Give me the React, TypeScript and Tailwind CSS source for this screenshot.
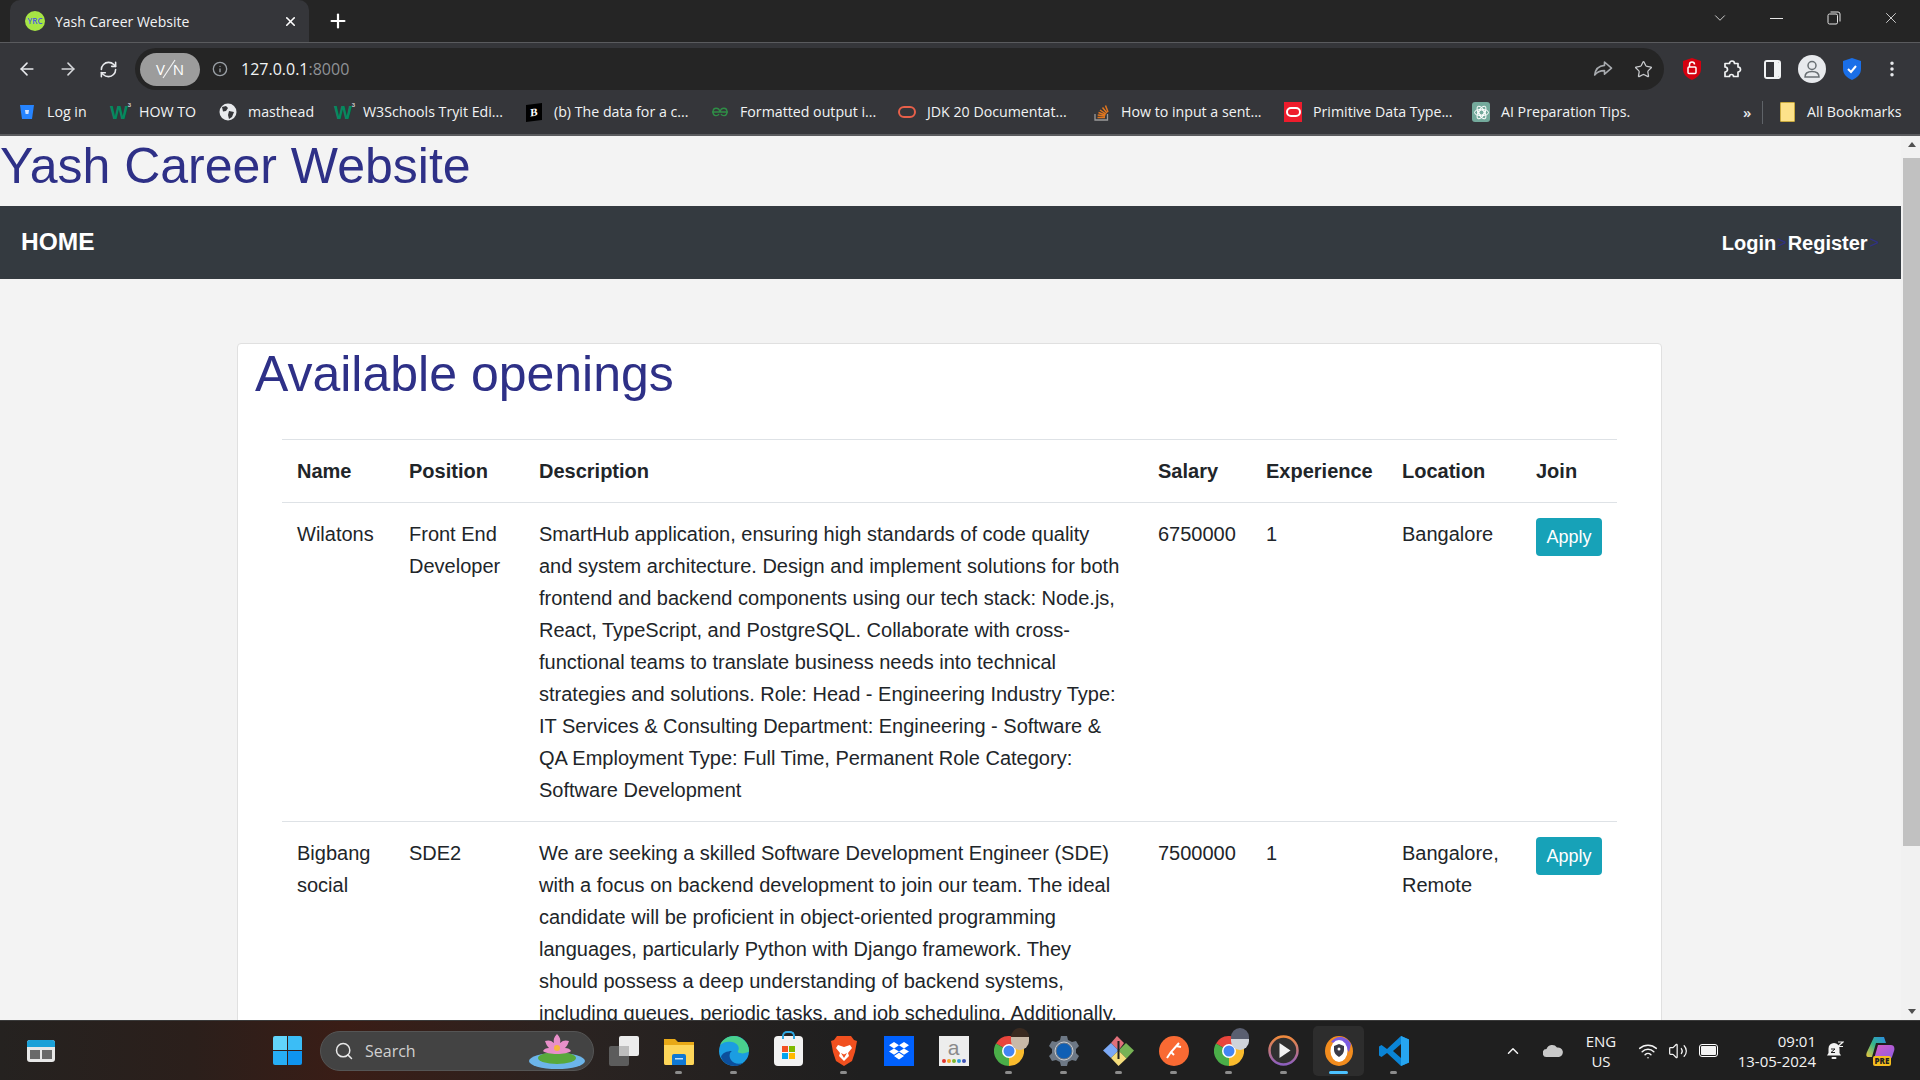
import {
  ArrowLeft,
  ArrowRight,
  ChevronDown,
  ChevronUp,
  Info,
  MoreVertical,
  Plus,
  RefreshCw,
  Search,
  Star,
  Volume2,
  Wifi,
  X,
} from "lucide-react"
import type { ReactNode } from "react"

const openings = [
  {
    name: "Wilatons",
    position: "Front End Developer",
    description:
      "SmartHub application, ensuring high standards of code quality and system architecture. Design and implement solutions for both frontend and backend components using our tech stack: Node.js, React, TypeScript, and PostgreSQL. Collaborate with cross-functional teams to translate business needs into technical strategies and solutions. Role: Head - Engineering Industry Type: IT Services & Consulting Department: Engineering - Software & QA Employment Type: Full Time, Permanent Role Category: Software Development",
    salary: "6750000",
    experience: "1",
    location: "Bangalore",
  },
  {
    name: "Bigbang social",
    position: "SDE2",
    description:
      "We are seeking a skilled Software Development Engineer (SDE) with a focus on backend development to join our team. The ideal candidate will be proficient in object-oriented programming languages, particularly Python with Django framework. They should possess a deep understanding of backend systems, including queues, periodic tasks, and job scheduling. Additionally,",
    salary: "7500000",
    experience: "1",
    location: "Bangalore, Remote",
  },
]

function Bookmark({ icon, label, className }: { icon: ReactNode; label: string; className: string }) {
  return (
    <div className={`flex h-full shrink-0 items-center ${className}`}>
      <span className="flex w-[18px] shrink-0 items-center justify-center">{icon}</span>
      <span className="ml-[11px] whitespace-nowrap text-[14.2px] text-[#f1f3f4]">{label}</span>
    </div>
  )
}

function W3Icon() {
  return (
    <span className="relative text-[19px] font-bold leading-none text-[#04895f] [font-family:'Liberation_Sans',sans-serif]">
      W<span className="absolute -right-[3px] -top-[1px] text-[6px] text-[#cfcfcf]">3</span>
    </span>
  )
}

function BrowserChrome() {
  return (
    <div className="shrink-0 [font-family:'Open_Sans',sans-serif]">
      <div className="flex h-[42px] items-end bg-[#252525]">
        <div className="ml-[10px] flex h-[42px] w-[299px] items-center rounded-t-[10px] bg-[#35363a] pl-[15px]">
          <span className="flex h-5 w-5 items-center justify-center rounded-full bg-[#a6e545] text-[8px] font-semibold text-[#4a5be0]">
            YRC
          </span>
          <span className="ml-[10px] text-[14px] text-[#f1f3f4]">Yash Career Website</span>
          <X className="ml-auto mr-[11px] h-[15px] w-[15px] text-white" strokeWidth={2.5} />
        </div>
        <div className="ml-[14px] flex h-[42px] w-[30px] items-center justify-center">
          <Plus className="h-[22px] w-[22px] text-white" strokeWidth={2.4} />
        </div>
        <div className="ml-auto flex h-[42px] items-center pb-[6px] pr-px text-[#dcdcdc]">
          <div className="mr-2 flex w-10 justify-center">
            <ChevronDown className="h-[18px] w-[18px]" strokeWidth={1.2} />
          </div>
          <div className="flex w-[57px] justify-center">
            <span className="h-px w-[13px] bg-[#e6e6e6]" />
          </div>
          <div className="flex w-[57px] justify-center">
            <svg width="14" height="14" viewBox="0 0 14 14" fill="none" stroke="#e6e6e6" strokeWidth="1">
              <rect x="1" y="3" width="9.5" height="10" rx="1.5" />
              <path d="M3.5 1h7.5a2 2 0 0 1 2 2v7.5" />
            </svg>
          </div>
          <div className="flex w-[57px] justify-center">
            <X className="h-[18px] w-[18px]" strokeWidth={1.2} />
          </div>
        </div>
      </div>

      <div className="flex h-[48px] items-end border-t border-[#5a5b5e] bg-[#35363a] pl-[6px]">
        <div className="flex h-[42px] w-[41px] items-center justify-center">
          <ArrowLeft className="h-[20px] w-[20px] text-[#e8eaed]" strokeWidth={1.9} />
        </div>
        <div className="flex h-[42px] w-[41px] items-center justify-center">
          <ArrowRight className="h-[20px] w-[20px] text-[#d5d7da]" strokeWidth={1.9} />
        </div>
        <div className="flex h-[42px] w-[40px] items-center justify-center">
          <RefreshCw className="h-[19px] w-[19px] text-[#e8eaed]" strokeWidth={2} />
        </div>
        <div className="ml-[7px] flex h-[42px] w-[1529px] items-center rounded-full bg-[#252525] pl-[5px]">
          <div className="flex h-[33px] w-[60px] items-center justify-center rounded-full bg-[#9c9c9c] text-[15px] text-white">
            <span>V</span>
            <svg className="mx-[-3px]" width="14" height="22" viewBox="0 0 14 22">
              <path d="M13 2L1 20" stroke="#f1f1f1" strokeWidth="1.2" />
            </svg>
            <span>N</span>
          </div>
          <Info className="ml-3 h-4 w-4 text-[#9aa0a6]" strokeWidth={2} />
          <span className="ml-[13px] text-[16px] text-[#f1f3f4]">
            127.0.0.1<span className="text-[#8f9296]">:8000</span>
          </span>
          <div className="ml-auto flex">
            <div className="flex w-[41px] justify-center">
              <svg width="20" height="18" viewBox="0 0 20 18" fill="none" stroke="#a8abaf" strokeWidth="1.6" strokeLinejoin="round">
                <path d="M11.5 2l7 6.2-7 6v-3.6c-4 0-7.300 1-9.800 4.400.6-5 3.600-9 9.800-9.600z" />
              </svg>
            </div>
            <div className="flex w-[41px] justify-center">
              <Star className="h-[19px] w-[19px] text-[#c9cbce]" strokeWidth={1.6} />
            </div>
          </div>
        </div>
        <div className="ml-2 flex h-[42px] items-center">
          <div className="flex w-10 justify-center">
            <svg width="18" height="22" viewBox="0 0 18 22">
              <path d="M9 0l9 3v8c0 5-3.500 8.500-9 11C3.500 19.500 0 16 0 11V3z" fill="#d4000f" />
              <rect x="5" y="9" width="8" height="6.500" rx="1" fill="none" stroke="#fff" strokeWidth="1.500" />
              <path d="M6.500 9V6.500a2.500 2.500 0 0 1 5 0" fill="none" stroke="#fff" strokeWidth="1.500" />
            </svg>
          </div>
          <div className="flex w-10 justify-center">
            <svg width="20" height="20" viewBox="0 0 20 20" fill="none" stroke="#f1f3f4" strokeWidth="1.700" strokeLinejoin="round">
              <path d="M7.500 4.500a2.500 2.500 0 0 1 5 0h3.500v3.500a2.500 2.500 0 0 1 0 5v4.500h-4.500a2 2 0 0 0-4 0H3v-4.500a2.500 2.500 0 0 0 0-5V4.500z" />
            </svg>
          </div>
          <div className="flex w-10 justify-center">
            <div className="flex h-[19px] w-[17px] overflow-hidden rounded-[3px] border-2 border-[#f1f3f4]">
              <span className="w-[8px] bg-[#35363a]" />
              <span className="flex-1 bg-[#f1f3f4]" />
            </div>
          </div>
          <div className="flex w-10 justify-center">
            <div className="flex h-[28px] w-[28px] items-center justify-center rounded-full bg-[#e8eaed]">
              <svg width="20" height="20" viewBox="0 0 20 20" fill="none" stroke="#6a7074" strokeWidth="1.500">
                <circle cx="10" cy="6.500" r="4" />
                <path d="M3 18c0-3.500 2.500-5.500 7-5.500s7 2 7 5.500z" />
              </svg>
            </div>
          </div>
          <div className="flex w-10 justify-center">
            <svg width="18" height="22" viewBox="0 0 18 22">
              <path d="M9 0l9 3v8c0 5-3.500 8.500-9 11C3.500 19.500 0 16 0 11V3z" fill="#1a6fe8" />
              <path d="M5 11l3 3 5-6" fill="none" stroke="#fff" strokeWidth="2" />
            </svg>
          </div>
          <div className="flex w-10 justify-center">
            <MoreVertical className="h-5 w-5 text-[#e8eaed]" strokeWidth={2.2} />
          </div>
        </div>
      </div>

      <div className="flex h-[46px] items-center border-b-2 border-[#5a5b5e] bg-[#35363a] pl-[18px]">
        <Bookmark
          className="w-[92px]"
          label="Log in"
          icon={
            <svg width="16" height="16" viewBox="0 0 16 16">
              <path d="M1 1h14l-2 14H3z" fill="#2684ff" />
              <path d="M6 6h4l-.6 4H6.600z" fill="#cfe2ff" />
            </svg>
          }
        />
        <Bookmark className="w-[109px]" label="HOW TO" icon={<W3Icon />} />
        <Bookmark
          className="w-[115px]"
          label="masthead"
          icon={
            <svg width="18" height="18" viewBox="0 0 18 18">
              <circle cx="9" cy="9" r="8.500" fill="#e8eaed" />
              <path d="M3 4l4-1 2 2-2 3-3 .5zM10 8l5 1-2 5-3 2-1-4z" fill="#35363a" />
            </svg>
          }
        />
        <Bookmark className="w-[191px]" label="W3Schools Tryit Edi..." icon={<W3Icon />} />
        <Bookmark
          className="w-[186px]"
          label="(b) The data for a c..."
          icon={
            <span className="flex h-[17px] w-[16px] skew-y-[-8deg] items-center justify-center bg-black text-[11px] font-bold leading-none text-white [font-family:'Liberation_Serif',serif]">
              B
            </span>
          }
        />
        <Bookmark
          className="w-[187px]"
          label="Formatted output i..."
          icon={
            <svg width="18" height="10" viewBox="0 0 18 10" fill="none" stroke="#2f8d46" strokeWidth="1.400">
              <path d="M1 5h16M9 5c-1-5-7-5-7 0s5 4 6 2M9 5c1-5 7-5 7 0s-5 4-6 2" />
            </svg>
          }
        />
        <Bookmark
          className="w-[194px]"
          label="JDK 20 Documentat..."
          icon={<span className="block h-[12px] w-[21px] rounded-[6px] border-2 border-[#e8604a]" />}
        />
        <Bookmark
          className="w-[192px]"
          label="How to input a sent..."
          icon={
            <svg width="15" height="18" viewBox="0 0 15 18" fill="none">
              <path d="M1 11v6h12.500v-6" stroke="#9a9a9a" strokeWidth="1.300" />
              <path d="M3.500 14.500h7.500M3.700 12l7.400 1M4.500 9.500l7 2.500M6 7l6 4M8.500 4.500l4.500 5.500M11.500 2.500l2.500 6.500" stroke="#e0761f" strokeWidth="1.500" />
            </svg>
          }
        />
        <Bookmark
          className="w-[188px]"
          label="Primitive Data Type..."
          icon={
            <span className="flex h-5 w-5 items-center justify-center bg-[#ee1c2c]">
              <span className="block h-[10px] w-[15px] rounded-[5px] border-2 border-white" />
            </span>
          }
        />
        <Bookmark
          className="w-[271px]"
          label="AI Preparation Tips."
          icon={
            <span className="flex h-5 w-5 items-center justify-center rounded-[3px] bg-[#74aa9c]">
              <svg width="15" height="15" viewBox="0 0 15 15" fill="none" stroke="#fff" strokeWidth="1">
                <circle cx="7.500" cy="7.500" r="2.500" />
                <ellipse cx="7.500" cy="7.500" rx="7" ry="3.200" />
                <ellipse cx="7.500" cy="7.500" rx="7" ry="3.200" transform="rotate(60 7.500 7.500)" />
                <ellipse cx="7.500" cy="7.500" rx="7" ry="3.200" transform="rotate(120 7.500 7.500)" />
              </svg>
            </span>
          }
        />
        <span className="w-[16px] shrink-0 text-[15px] font-semibold text-[#e8eaed]">»</span>
        <span className="ml-[3px] h-[23px] w-px bg-[#5f6368]" />
        <div className="ml-[17px] flex h-full items-center">
          <span className="relative block h-5 w-[15px] rounded-[1px] border border-[#c8a93e] bg-[#fde28a]" />
          <span className="ml-[12px] whitespace-nowrap text-[14.2px] text-[#f1f3f4]">All Bookmarks</span>
        </div>
      </div>
    </div>
  )
}

function ApplyButton() {
  return (
    <button
      type="button"
      className="h-[38px] w-[66px] rounded-[4px] bg-[#17a2b8] text-[18px] leading-6 text-white"
    >
      Apply
    </button>
  )
}

function PageContent() {
  return (
    <div className="flex min-h-0 flex-1 bg-[#f3f3f3] [font-family:'Liberation_Sans',Arial,sans-serif]">
      <main className="min-w-0 flex-1 overflow-hidden">
        <h1 className="mb-[10px] text-[50px] font-normal leading-[60px] text-[#2e3087]">Yash Career Website</h1>
        <nav className="flex h-[73px] items-center bg-[#343a40] pl-[21px] pr-[22px] font-bold text-white">
          <a className="text-[24.5px]">HOME</a>
          <div className="ml-auto flex items-center text-[20px]">
            <a>Login</a>
            <span className="ml-[1px] text-[16px] font-normal text-[#2e3087]">&gt;</span>
            <a className="ml-[1px]">Register</a>
            <span className="ml-[2px] text-[16px] font-normal text-[#2e3087]">&gt;</span>
          </div>
        </nav>
        <section className="ml-[237px] mt-16 w-[1425px] rounded-[4px] border border-[#e0e0e0] bg-white">
          <h2 className="pl-[17px] text-[50px] font-normal leading-[60px] text-[#2e3087]">Available openings</h2>
          <table className="ml-[44px] mt-[35px] w-[1335px] table-fixed border-collapse text-left text-[20px] leading-8 text-[#212529]">
            <colgroup>
              <col className="w-[112px]" />
              <col className="w-[130px]" />
              <col className="w-[619px]" />
              <col className="w-[108px]" />
              <col className="w-[136px]" />
              <col className="w-[134px]" />
              <col className="w-[96px]" />
            </colgroup>
            <thead>
              <tr className="border-t border-[#dee2e6]">
                <th className="p-[15px] font-bold">Name</th>
                <th className="p-[15px] font-bold">Position</th>
                <th className="p-[15px] font-bold">Description</th>
                <th className="p-[15px] font-bold">Salary</th>
                <th className="p-[15px] font-bold">Experience</th>
                <th className="p-[15px] font-bold">Location</th>
                <th className="p-[15px] font-bold">Join</th>
              </tr>
            </thead>
            <tbody>
              {openings.map((job) => (
                <tr key={job.name} className="border-t border-[#dee2e6] align-top">
                  <td className="p-[15px]">{job.name}</td>
                  <td className="p-[15px]">{job.position}</td>
                  <td className="p-[15px]">{job.description}</td>
                  <td className="p-[15px]">{job.salary}</td>
                  <td className="p-[15px]">{job.experience}</td>
                  <td className="p-[15px]">{job.location}</td>
                  <td className="p-[15px]">
                    <ApplyButton />
                  </td>
                </tr>
              ))}
            </tbody>
          </table>
        </section>
      </main>
      <div className="flex w-[19px] shrink-0 flex-col bg-[#f1f1f1] pl-[2px]">
        <div className="flex h-[17px] items-center justify-center">
          <span className="h-0 w-0 border-x-[4px] border-b-[5px] border-x-transparent border-b-[#505050]" />
        </div>
        <div className="mt-[5px] h-[688px] bg-[#c1c1c1]" />
        <div className="mt-auto flex h-[17px] items-center justify-center">
          <span className="h-0 w-0 border-x-[4px] border-t-[5px] border-x-transparent border-t-[#505050]" />
        </div>
      </div>
    </div>
  )
}

function TaskIcon({ children, dot, active }: { children: ReactNode; dot?: boolean; active?: boolean }) {
  return (
    <div className="relative flex h-full w-[55px] items-center justify-center">
      {active && <span className="absolute inset-x-[2px] bottom-[4px] top-[5px] rounded-[5px] bg-[#2d2d2d]" />}
      <span className="relative flex items-center justify-center">{children}</span>
      {dot && <span className="absolute bottom-[6px] h-[3px] w-[7px] rounded-full bg-[#8c8c8c]" />}
      {active && <span className="absolute bottom-[6px] h-[3px] w-[19px] rounded-full bg-[#4cc2ff]" />}
    </div>
  )
}

function ChromeLogo({ face }: { face: string }) {
  return (
    <span className="relative block h-[30px] w-[30px]">
      <svg width="30" height="30" viewBox="0 0 30 30">
        <path d="M15 15L2 7.500A15 15 0 0 1 28 7.500z" fill="#e8453c" />
        <path d="M15 15L28 7.500A15 15 0 0 1 15 30z" fill="#f9bb2d" />
        <path d="M15 15L15 30A15 15 0 0 1 2 7.500z" fill="#4aae48" />
        <circle cx="15" cy="15" r="7" fill="#fff" />
        <circle cx="15" cy="15" r="5.500" fill="#4285f4" />
      </svg>
      <span className={`absolute -right-[5px] -top-[8px] h-[22px] w-[18px] rounded-full ${face}`} />
    </span>
  )
}

function Taskbar() {
  return (
    <div className="flex h-[60px] shrink-0 items-center border-t border-[#3a3a3a] bg-[linear-gradient(90deg,#252220_0%,#2b1f1b_10%,#3a1d16_18%,#2a2321_30%,#1f1f1f_45%)] text-[#f3f3f3] [font-family:'Open_Sans',sans-serif]">
      <div className="ml-[27px] flex h-[22px] w-[28px] flex-col overflow-hidden rounded-[3px] bg-[#e8e8e8]">
        <span className="h-[7px] bg-[#1ba1d8]" />
        <span className="mx-[3px] mt-[3px] flex flex-1 gap-[2px] pb-[3px]">
          <span className="flex-1 bg-[#6a6a6a]" />
          <span className="flex-1 bg-[#6a6a6a]" />
        </span>
      </div>
      <div className="ml-[218px] grid h-[29px] w-[29px] grid-cols-2 gap-[1px]">
        <span className="rounded-tl-[2px] bg-[#62d5fb]" />
        <span className="rounded-tr-[2px] bg-[#3bbdf6]" />
        <span className="rounded-bl-[2px] bg-[#27aef5]" />
        <span className="rounded-br-[2px] bg-[#0f94ef]" />
      </div>
      <div className="ml-[18px] flex h-10 w-[274px] items-center rounded-full border border-[#555] bg-[#434343] pl-[13px]">
        <Search className="h-[20px] w-[20px] text-[#e8e8e8]" strokeWidth={1.8} />
        <span className="ml-[11px] text-[16px] text-[#d0d0d0]">Search</span>
        <svg className="ml-auto mr-[8px]" width="56" height="38" viewBox="0 0 56 38">
          <ellipse cx="28" cy="29" rx="28" ry="8" fill="#6cb5ea" />
          <ellipse cx="28" cy="26" rx="19" ry="6" fill="#58a83c" />
          <path d="M28 2c3 3 4 6 3 9 3-3 6-3 9-2-1 3-2 5-4 7 3 0 5 1 6 3-4 4-24 4-28 0 1-2 3-3 6-3-2-2-3-4-4-7 3-1 6-1 9 2-1-3 0-6 3-9z" fill="#e88fc9" />
          <circle cx="28" cy="16" r="3" fill="#f6b73c" />
        </svg>
      </div>
      <div className="ml-[2px] flex h-full">
        <TaskIcon>
          <span className="relative block h-[30px] w-[30px]">
            <span className="absolute bottom-0 left-0 h-5 w-5 rounded-[2px] bg-[#5c5c5c]" />
            <span className="absolute right-0 top-0 h-5 w-5 rounded-[2px] bg-[#ececec]" />
            <span className="absolute bottom-[10px] left-[10px] h-[10px] w-[10px] bg-[#bdbdbd]" />
          </span>
        </TaskIcon>
        <TaskIcon dot>
          <svg width="30" height="28" viewBox="0 0 30 28">
            <path d="M0 2h11l3 3h16v21a2 2 0 0 1-2 2H2a2 2 0 0 1-2-2z" fill="#e8a917" />
            <path d="M0 8h30v18a2 2 0 0 1-2 2H2a2 2 0 0 1-2-2z" fill="#fdd65a" />
            <path d="M8 19a2 2 0 0 1 2-2h10a2 2 0 0 1 2 2v9H8z" fill="#0f78d4" />
            <rect x="11" y="21" width="8" height="1.500" fill="#bfe0fb" />
          </svg>
        </TaskIcon>
        <TaskIcon dot>
          <svg width="30" height="30" viewBox="0 0 30 30">
            <circle cx="15" cy="15" r="15" fill="#1b9de2" />
            <path d="M30 15C30 7 23 0 15 0 8 0 3 4 1 9c3-3 8-4 12-3 6 1 8 6 6 9-1 2 4 3 7 2 2-.5 4-1 4-2z" fill="#49d18e" />
            <path d="M2 21c2 6 8 9 14 9 3 0 6-1 8-3-5 2-10 0-12-3-2-3-2-7 1-9-5 0-10 2-11 6z" fill="#0c4f9c" />
          </svg>
        </TaskIcon>
        <TaskIcon>
          <span className="relative block h-[30px] w-[29px] rounded-[4px] bg-[#f2f2f2]">
            <span className="absolute -top-[5px] left-[8px] h-[8px] w-[13px] rounded-t-[5px] border-2 border-b-0 border-[#2ea7e0]" />
            <span className="absolute left-[8px] top-[10px] grid h-[13px] w-[13px] grid-cols-2 gap-px">
              <span className="bg-[#f25022]" />
              <span className="bg-[#7fba00]" />
              <span className="bg-[#00a4ef]" />
              <span className="bg-[#ffb900]" />
            </span>
          </span>
        </TaskIcon>
        <TaskIcon dot>
          <svg width="26" height="30" viewBox="0 0 26 30">
            <path d="M6 0h14l3 4 3 1-2 11-3 9-8 5-8-5-3-9L0 5l3-1z" fill="#f1501f" />
            <path d="M7 9l6 2 6-2 2 3-4 5 1 3-5 5-5-5 1-3-4-5z" fill="#fff" />
            <path d="M10 17l3 1.500 3-1.500-3 5z" fill="#f1501f" />
          </svg>
        </TaskIcon>
        <TaskIcon>
          <span className="flex h-[30px] w-[30px] items-center justify-center bg-[#0061fe]">
            <svg width="20" height="18" viewBox="0 0 20 18" fill="#fff">
              <path d="M5 0l5 3.200-5 3.200L0 3.200zM15 0l5 3.200-5 3.200-5-3.200zM0 9.600l5-3.200 5 3.200-5 3.200zM20 9.600l-5-3.200-5 3.200 5 3.200zM5 14l5-3.200 5 3.200-5 3.500z" />
            </svg>
          </span>
        </TaskIcon>
        <TaskIcon>
          <span className="flex h-[30px] w-[30px] flex-col items-center bg-[#ededed] pt-[1px]">
            <span className="text-[21px] leading-[21px] text-[#8a8a8a] [font-family:'Liberation_Sans',sans-serif]">a</span>
            <span className="mt-[1px] flex gap-[1px]">
              <span className="h-[4px] w-[4px] rounded-full bg-[#e2342c]" />
              <span className="h-[4px] w-[4px] rounded-full bg-[#f5a623]" />
              <span className="h-[4px] w-[4px] rounded-full bg-[#7cb82f]" />
              <span className="h-[4px] w-[4px] rounded-full bg-[#2d9cdb]" />
              <span className="h-[4px] w-[4px] rounded-full bg-[#3f51b5]" />
            </span>
          </span>
        </TaskIcon>
        <TaskIcon dot>
          <ChromeLogo face="bg-[linear-gradient(180deg,#3a2a20_40%,#c9b9a8_40%)]" />
        </TaskIcon>
        <TaskIcon dot>
          <svg width="30" height="30" viewBox="0 0 30 30">
            <path d="M12 0h6l1 4 4 2 4-1 3 5-3 3v4l3 3-3 5-4-1-4 2-1 4h-6l-1-4-4-2-4 1-3-5 3-3v-4L0 10l3-5 4 1 4-2z" fill="#6d7885" />
            <circle cx="15" cy="15" r="7.500" fill="#0f5fb4" />
            <circle cx="15" cy="15" r="9" fill="none" stroke="#c9ced4" strokeWidth="1" />
          </svg>
        </TaskIcon>
        <TaskIcon dot>
          <svg width="31" height="31" viewBox="0 0 31 31">
            <path d="M15.500 15.500L8 8 14 1l7 7z" fill="#e0707a" />
            <path d="M15.500 15.500L23 8l8 7.500-7.500 8z" fill="#77b255" />
            <path d="M15.500 15.500L8 23 0 15.500 8 8z" fill="#7ca9f5" />
            <path d="M15.500 15.500L23.500 23.500 15.500 31 8 23z" fill="#f4dd7c" />
            <path d="M15.500 6v18" stroke="#1f1f1f" strokeWidth="2" />
          </svg>
        </TaskIcon>
        <TaskIcon dot>
          <svg width="30" height="30" viewBox="0 0 30 30">
            <circle cx="15" cy="15" r="15" fill="#f96a33" />
            <path d="M20 7l-8 9-4 6M17 10l5 1M12 16l3 3" stroke="#fff" strokeWidth="2" fill="none" />
          </svg>
        </TaskIcon>
        <TaskIcon dot>
          <ChromeLogo face="bg-[linear-gradient(180deg,#5a5f70_50%,#cfd3da_50%)]" />
        </TaskIcon>
        <TaskIcon dot>
          <svg width="31" height="31" viewBox="0 0 31 31">
            <defs>
              <linearGradient id="player-ring" x1="0" y1="0" x2="0" y2="1">
                <stop offset="0" stopColor="#f08a3c" />
                <stop offset="1" stopColor="#8d5fc0" />
              </linearGradient>
            </defs>
            <circle cx="15.500" cy="15.500" r="14" fill="#303030" stroke="url(#player-ring)" strokeWidth="2.500" />
            <path d="M11.500 8l11 7.500-11 7.500z" fill="#f2f2f2" />
          </svg>
        </TaskIcon>
        <TaskIcon active>
          <svg width="28" height="30" viewBox="0 0 28 30">
            <ellipse cx="14" cy="15" rx="14" ry="15" fill="#f28c1e" />
            <path d="M6 6c4-6 14-8 20 2l-2 8C20 10 12 8 6 6z" fill="#7b5be0" />
            <ellipse cx="14" cy="15" rx="8.500" ry="11" fill="#fff" />
            <path d="M14 8l5 2v4c0 3-2 5-5 7-3-2-5-4-5-7v-4z" fill="#3a3a46" />
            <circle cx="14" cy="13" r="1.500" fill="#fff" />
          </svg>
        </TaskIcon>
        <TaskIcon dot>
          <svg width="30" height="30" viewBox="0 0 30 30">
            <path d="M22 0l8 3.500v23L22 30 8 17l-5.500 4L0 19.500v-9L2.500 9 8 13z" fill="#0a84d6" />
            <path d="M22 8l-8 7 8 7z" fill="#1f1f1f" />
            <path d="M22 0l8 3.500v23L22 30z" fill="#26a5f0" />
          </svg>
        </TaskIcon>
      </div>

      <div className="ml-auto flex h-full items-center pr-[14px]">
        <div className="flex w-10 justify-center">
          <ChevronUp className="h-[18px] w-[18px]" strokeWidth={2} />
        </div>
        <div className="flex w-10 justify-center">
          <svg width="20" height="13" viewBox="0 0 20 13" fill="#c9c9c9">
            <path d="M4 13a4 4 0 0 1-.5-8A6 6 0 0 1 14 3.500 4.800 4.800 0 0 1 16 13z" />
          </svg>
        </div>
        <div className="w-14 text-center text-[15px] leading-5">
          <div>ENG</div>
          <div>US</div>
        </div>
        <div className="flex w-[38px] justify-center">
          <Wifi className="h-[20px] w-[20px]" strokeWidth={1.8} />
        </div>
        <div className="flex w-[22px] justify-center">
          <Volume2 className="h-[20px] w-[20px]" strokeWidth={1.5} />
        </div>
        <div className="flex w-[38px] justify-center">
          <span className="flex h-[13px] w-[19px] items-center rounded-[3px] border border-white p-[1px]">
            <span className="h-full w-full rounded-[1px] bg-[#f3f3f3]" />
          </span>
        </div>
        <div className="w-[89px] text-right text-[15px] leading-5">
          <div>09:01</div>
          <div>13-05-2024</div>
        </div>
        <div className="flex w-[38px] justify-center">
          <svg width="18" height="20" viewBox="0 0 18 20" fill="#f3f3f3">
            <path d="M8 2a5.500 5.500 0 0 0-5.500 5.500V12L1 14.500h14L13.500 12V8A5.500 5.500 0 0 0 8 2z" />
            <rect x="5.500" y="16" width="5" height="2" rx="1" />
            <path d="M5 8h4l-4 3.500h4" stroke="#1f1f1f" strokeWidth="1" fill="none" />
            <path d="M12 1h5l-5 4.500h5" stroke="#f3f3f3" strokeWidth="1.200" fill="none" />
          </svg>
        </div>
        <div className="flex w-[52px] justify-center">
          <span className="relative block h-[28px] w-[29px]">
            <svg width="29" height="22" viewBox="0 0 29 22">
              <defs>
                <linearGradient id="copilot-a" x1="0" y1="1" x2="1" y2="0">
                  <stop offset="0" stopColor="#f0c83a" />
                  <stop offset="0.5" stopColor="#34b58a" />
                  <stop offset="1" stopColor="#2a8ae8" />
                </linearGradient>
                <linearGradient id="copilot-b" x1="0" y1="0" x2="1" y2="1">
                  <stop offset="0" stopColor="#d65cc0" />
                  <stop offset="1" stopColor="#8c5ce8" />
                </linearGradient>
              </defs>
              <path d="M8 0h10l2 6H10L6 20H2C0 20 0 17 1 15z" fill="url(#copilot-a)" />
              <path d="M12 8h13c3 0 4 3 3 6l-2 6c-1 2-2 2-4 2H8z" fill="url(#copilot-b)" />
            </svg>
            <span className="absolute -bottom-[1px] left-[7px] rounded-[2px] bg-[#f5bd1f] px-[2px] text-[8px] font-extrabold leading-[10px] text-[#1f1f1f]">
              PRE
            </span>
          </span>
        </div>
      </div>
    </div>
  )
}

export default function App() {
  return (
    <div className="flex h-screen w-full flex-col overflow-hidden">
      <BrowserChrome />
      <PageContent />
      <Taskbar />
    </div>
  )
}
